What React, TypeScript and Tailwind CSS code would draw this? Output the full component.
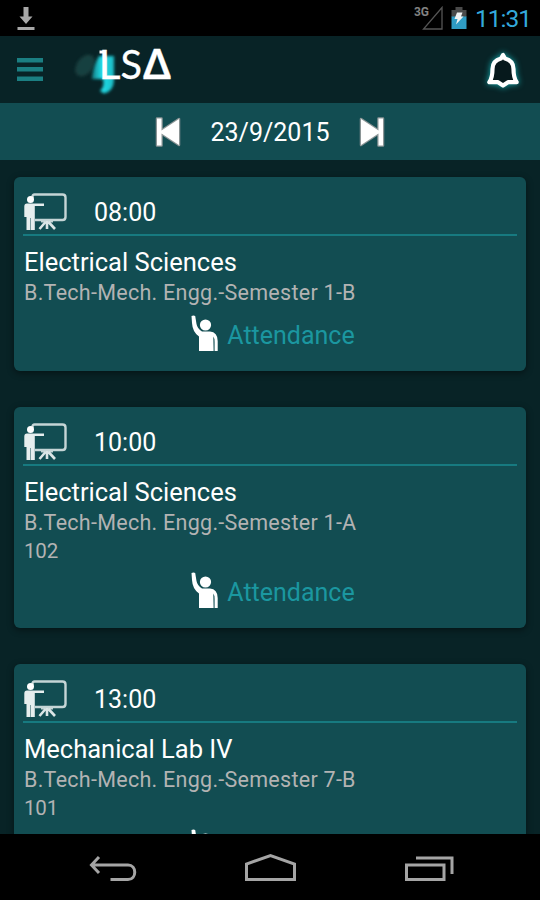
type Lecture = {
  time: string;
  subject: string;
  course: string;
  room?: string;
};

const lectures: Lecture[] = [
  { time: '08:00', subject: 'Electrical Sciences', course: 'B.Tech-Mech. Engg.-Semester 1-B' },
  { time: '10:00', subject: 'Electrical Sciences', course: 'B.Tech-Mech. Engg.-Semester 1-A', room: '102' },
  { time: '13:00', subject: 'Mechanical Lab IV', course: 'B.Tech-Mech. Engg.-Semester 7-B', room: '101' },
];

function StatusBar() {
  return (
    <div className="flex h-9 shrink-0 items-center bg-black pl-[17px] pr-[9px]">
      <svg width="18" height="24" viewBox="0 0 18 24" fill="#a8a8a8">
        <path d="M6.500 1h5v9.500h4L9 18 2.500 10.500h4zM.5 21h17v3H.5z" />
      </svg>
      <div className="ml-auto flex items-center">
        <span className="mb-[12px] text-[12px] font-bold leading-none text-[#828282]">3G</span>
        <svg className="-ml-[7px]" width="22" height="24" viewBox="0 0 22 24" fill="none" stroke="#555" strokeWidth="1.300">
          <path d="M20 1.500V23H1.500z" />
        </svg>
        <svg className="ml-[7px]" width="16" height="22" viewBox="0 0 16 22">
          <path d="M4.500 0h7v3h4v7H.5V3h4z" fill="#4a4a4a" />
          <path d="M.5 9.500h15V22H.5z" fill="#2f9cc4" />
          <path d="M6 5.500h5.500L10 9.500h2.500L5 17.500l1.500-5.500H3.500z" fill="#f2f2f2" />
        </svg>
        <span className="ml-[8px] mt-px text-[24.500px] leading-9 tracking-[-1px] text-[#33a9dc]">11:31</span>
      </div>
    </div>
  );
}

function Logo() {
  return (
    <svg width="110" height="60" viewBox="70 40 110 60" className="ml-[27px] overflow-visible">
      <defs>
        <filter id="soft" x="-40%" y="-40%" width="180%" height="180%">
          <feGaussianBlur stdDeviation="1.500" />
        </filter>
        <linearGradient id="drop" x1="0" y1="0" x2="1" y2="0">
          <stop offset="0" stopColor="#147f86" />
          <stop offset="0.450" stopColor="#22dde8" />
          <stop offset="1" stopColor="#19bcc5" />
        </linearGradient>
      </defs>
      <ellipse cx="85" cy="65.500" rx="8" ry="12" fill="#17403f" filter="url(#soft)" transform="rotate(38 85 65.500)" />
      <path d="M99 56h15v24q0 11-10 13.500l-4-2.500q5-5 3-12H92q1-13 7-23z" fill="url(#drop)" filter="url(#soft)" />
      {/* serif on the L */}
      <path d="M99.500 50.500h5v3h-5z" fill="#fff" />
      <g fill="#fff" stroke="#fff" strokeWidth="0.300" fontFamily="Lato, sans-serif" fontSize="40">
        <text x="98.500" y="79" textLength="22" lengthAdjust="spacingAndGlyphs">L</text>
        <text x="120.500" y="79" textLength="21.500" lengthAdjust="spacingAndGlyphs">S</text>
        <text x="142.500" y="79" fontFamily="Open Sans, sans-serif" fontWeight="600" fontSize="41" textLength="29" lengthAdjust="spacingAndGlyphs">Δ</text>
      </g>
    </svg>
  );
}

function Header() {
  return (
    <header className="flex h-[67px] shrink-0 items-center bg-[#082326] pl-[17px] pr-[17px]">
      <svg width="26" height="24" viewBox="0 0 26 24" fill="#1b7f82">
        <path d="M0 0h26v4.500H0zM0 9h26v4.500H0zM0 18.500h26V23H0z" />
      </svg>
      <Logo />
      <svg
        className="ml-auto mt-[5px] overflow-visible drop-shadow-[0_0_3px_#14b0b3]"
        width="40"
        height="44"
        viewBox="482.500 50 40 44"
        fill="#06191c"
        stroke="#fff"
        strokeWidth="4.200"
        strokeLinejoin="round"
      >
        <path d="M502.500 55l-2 3.500c-6 1.500-8.500 5.500-8.500 10.500 0 7-.5 9.500-3.200 13.200h8.700l5 3.300 5-3.300h8.700c-2.700-3.700-3.200-6.200-3.200-13.200 0-5-2.500-9-8.500-10.500z" />
      </svg>
    </header>
  );
}

function SkipIcon({ flip = false }: { flip?: boolean }) {
  return (
    <svg
      className={flip ? 'rotate-180 overflow-visible' : 'overflow-visible'}
      width="24"
      height="28"
      viewBox="0 0 24 28"
      fill="#fff"
      stroke="#8b9596"
      strokeWidth="2.500"
      strokeLinejoin="round"
      paintOrder="stroke"
    >
      <path d="M1 .5h4.500v12L23 1v26L5.500 15.500v12H1z" />
    </svg>
  );
}

function DateBar() {
  return (
    <div className="flex h-[57px] shrink-0 items-center justify-center bg-[#124d52]">
      <SkipIcon />
      <span className="mt-[2px] w-[180px] text-center text-[25px] leading-none text-white">23/9/2015</span>
      <SkipIcon flip />
    </div>
  );
}

function TeacherIcon() {
  return (
    <svg width="44" height="38" viewBox="0 0 44 38" fill="none">
      <path d="M8.500 5V3.500Q8.500 1.500 10.500 1.500H38.500Q41.500 1.500 41.500 4.500V24Q41.500 27 38.500 27H11" stroke="#c5d5d6" strokeWidth="2.400" />
      <path d="M17 28.500h12" stroke="#c5d5d6" strokeWidth="2" />
      <path d="M21.500 29L15.500 36M24.500 29L31 36M23 28v8" stroke="#dbe5e6" strokeWidth="2.600" />
      <circle cx="6.500" cy="6.500" r="3.500" fill="#fff" />
      <path d="M3 10.500H20v2.600H10.800V37H7V25H6.500V37H2.500V24H.3V13.500Q.3 10.500 3 10.500z" fill="#e6eeee" />
    </svg>
  );
}

function RaisedHandIcon() {
  return (
    <svg width="28" height="37" viewBox="0 0 28 37" fill="#fff">
      <circle cx="14.500" cy="10" r="5.600" />
      <path d="M.5 1Q2.500-.2 4.200 1L5.500 9Q6.500 14 11 16.500H19Q26.500 17 26.700 26V36H23.600V27Q23.600 23 22.300 21.500L22.600 36H8V21.500Q1.500 17 1 8z" />
    </svg>
  );
}

function LectureCard({ time, subject, course, room }: Lecture) {
  return (
    <article className="shrink-0 rounded-[6px] bg-[#124d52] px-[9px] pb-[17.500px] shadow-[0_2px_7px_rgba(0,0,0,0.45)]">
      <div className="flex h-[59px] items-end border-b-2 border-[#177a80] pb-[3px] pl-px">
        <TeacherIcon />
        <span className="ml-[26px] text-[25px] leading-[36px] text-white">{time}</span>
      </div>
      <h2 className="mt-[10px] pl-px text-[25.500px] font-normal leading-[32px] text-white">{subject}</h2>
      <p className="mt-px pl-px text-[21.500px] leading-[28.500px] tracking-[0.270px] text-[#b3b3b3]">{course}</p>
      {room && <p className="pl-px text-[20.500px] leading-[27px] tracking-[-0.200px] text-[#b3b3b3]">{room}</p>}
      <div className="mt-[8px] flex h-[37px] items-center justify-center pb-px pl-[6px]">
        <RaisedHandIcon />
        <span className="ml-[8px] mt-[3px] text-[25px] leading-none text-[#1b97a0]">Attendance</span>
      </div>
      <div className="h-px" />
    </article>
  );
}

function NavBar() {
  return (
    <nav className="h-[66px] shrink-0 bg-black">
      <svg width="540" height="66" viewBox="0 834 540 66" fill="none" stroke="#a5a5a5" strokeWidth="3">
        <path d="M99 857l-7.500 8 7.500 8M92 865h36c9 0 9 14.500 0 14.500h-17.500" />
        <path d="M246.500 879.500v-15.500L270.500 855.500l24 8.500v15.500z" />
        <path d="M406.500 865h37.500v14.500h-37.500zM416 858h36v16" />
      </svg>
    </nav>
  );
}

export default function App() {
  return (
    <div className="flex h-[900px] w-[540px] flex-col overflow-hidden bg-[#082326] font-['Roboto',sans-serif]">
      <StatusBar />
      <Header />
      <DateBar />
      <main className="flex min-h-0 flex-1 flex-col gap-9 overflow-hidden px-[14px] pt-[17px]">
        {lectures.map((lecture) => (
          <LectureCard key={lecture.time} {...lecture} />
        ))}
      </main>
      <NavBar />
    </div>
  );
}
